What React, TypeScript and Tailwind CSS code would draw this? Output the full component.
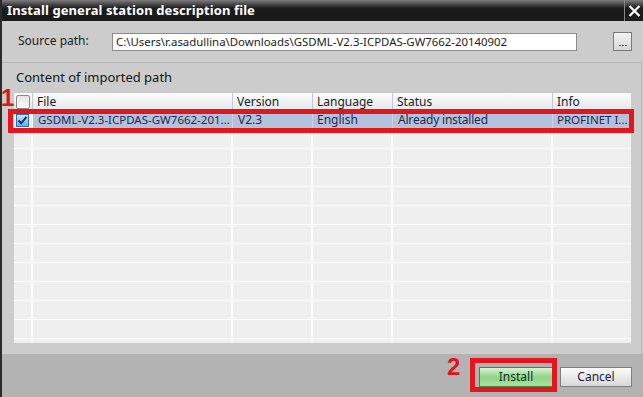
import React from "react";

const FONT = { fontFamily: '"Noto Sans", "Open Sans", sans-serif' };

const columns = [
  { key: "check", label: "", width: 19 },
  { key: "file", label: "File", width: 200 },
  { key: "version", label: "Version", width: 80 },
  { key: "language", label: "Language", width: 80 },
  { key: "status", label: "Status", width: 160 },
  { key: "info", label: "Info", width: 78 },
];

const gridCols = "grid grid-cols-[19px_200px_80px_80px_160px_78px]";

function Checkbox({ checked }: { checked?: boolean }) {
  if (checked) {
    return (
      <div className="w-[13px] h-[13px] border border-[#2c6fb0] bg-gradient-to-b from-[#c9e6fb] to-[#5fb1ea] flex items-center justify-center">
        <svg width="11" height="11" viewBox="0 0 11 11">
          <path d="M1.5 5.5 L4.2 8.3 L9.5 1.8" stroke="#0b2f6e" strokeWidth="2" fill="none" />
        </svg>
      </div>
    );
  }
  return (
    <div className="w-[14px] h-[14px] border border-[#8a8a8a] rounded-[2px] bg-gradient-to-b from-[#e6e6e6] to-[#f8f8f8]" />
  );
}

function GsdTable() {
  const emptyRows = Array.from({ length: 12 });
  return (
    <div className="ml-[12px] w-[617px] h-[251px] overflow-hidden bg-[#efefef]">
      {/* header */}
      <div className={`${gridCols} h-[19px] border-t border-[#c8c8c8] bg-gradient-to-b from-[#fbfbfb] to-[#e3e6eb] text-[12px] text-[#1c1c1c]`}>
        {columns.map((c, i) => (
          <div
            key={c.key}
            className={`flex items-center pl-[4px] ${i < columns.length - 1 ? "border-r border-[#c4c8cf]" : ""}`}
          >
            {c.key === "check" ? <div className="ml-[-2px]"><Checkbox /></div> : c.label}
          </div>
        ))}
      </div>

      {/* selected row */}
      <div className={`${gridCols} h-[19px] border-b border-white text-[12px] text-[#1f2a4d]`}>
        <div className="flex items-center pl-[2px] border-r border-white">
          <Checkbox checked />
        </div>
        <div className="flex items-center pl-[5px] bg-[#b3c2dc] border-r border-[#c9d3e5] whitespace-nowrap text-[11.5px]">GSDML-V2.3-ICPDAS-GW7662-201...</div>
        <div className="flex items-center pl-[5px] bg-[#b3c2dc] border-r border-[#c9d3e5]">V2.3</div>
        <div className="flex items-center pl-[4px] bg-[#b3c2dc] border-r border-[#c9d3e5]">English</div>
        <div className="flex items-center pl-[5px] bg-[#b3c2dc] border-r border-[#c9d3e5] tracking-[-0.2px]">Already installed</div>
        <div className="flex items-center pl-[4px] bg-[#b3c2dc] whitespace-nowrap text-[11.5px]">PROFINET I...</div>
      </div>

      {emptyRows.map((_, r) => (
        <div key={r} className={`${gridCols} h-[19px] border-b border-white`}>
          {columns.map((c, i) => (
            <div key={c.key} className={i < columns.length - 1 ? "border-r-2 border-white" : ""} />
          ))}
        </div>
      ))}
    </div>
  );
}

export default function App() {
  return (
    <div style={FONT} className="relative w-[643px] h-[397px] overflow-hidden flex flex-col bg-[#cccccc] border-l-2 border-[#2b2b2b]">
      {/* title bar */}
      <div className="h-[21px] shrink-0 flex items-stretch bg-gradient-to-b from-[#7d7d7d] via-[#1c1c1c] via-40% to-[#1a1a1a]">
        <div className="flex-1 flex items-center pl-[5px] text-white font-bold text-[13px] tracking-[0.1px]">
          Install general station description file
        </div>
        <div className="w-[19px] border-l border-[#8a8a8a] flex items-center justify-center">
          <svg width="13" height="12" viewBox="0 0 13 12">
            <path d="M1.5 1 L11.5 11 M11.5 1 L1.5 11" stroke="#ffffff" strokeWidth="2.2" />
          </svg>
        </div>
      </div>

      {/* source path */}
      <div className="h-[41px] shrink-0 flex items-center text-[12px] text-[#1c1c1c]">
        <div className="w-[110px] pl-[16px] pb-[2px]">Source path:</div>
        <div className="w-[465px] h-[18px] bg-white border border-[#8c8c8c] flex items-center pl-[3px] whitespace-nowrap text-[11.4px]">
          C:\Users\r.asadullina\Downloads\GSDML-V2.3-ICPDAS-GW7662-20140902
        </div>
        <div className="ml-[36px] w-[19px] h-[19px] border border-[#7a7a7a] bg-gradient-to-b from-[#f4f4f4] to-[#d6d6d6] flex items-end justify-center pb-[4px] gap-[1px]">
          <span className="w-[2px] h-[1px] bg-[#c04040]" />
          <span className="w-[2px] h-[1px] bg-[#3a6a3a]" />
          <span className="w-[2px] h-[1px] bg-[#4040c0]" />
        </div>
      </div>

      {/* content section */}
      <div className="h-[292px] shrink-0 border-t border-[#b9b9b9] border-r border-r-[#b9b9b9] mr-[1px] flex flex-col">
        <div className="h-[29px] flex items-center pl-[14px] text-[13px] text-[#141414]">
          Content of imported path
        </div>
        <GsdTable />
      </div>

      {/* footer */}
      <div className="flex-1 bg-[#b3b3b3] flex items-center justify-end pr-[11px] gap-[7px] pt-[3px]">
        <button className="w-[74px] h-[20px] border border-[#3f8a3f] bg-gradient-to-b from-[#d9f3d3] via-[#8fd588] to-[#a9e0a1] text-[12px] text-[#14301a] flex items-center justify-center">
          Install
        </button>
        <button className="w-[72px] h-[20px] border border-[#7e7e7e] bg-gradient-to-b from-[#fbfbfb] to-[#d8d8d8] text-[12px] text-[#1c1c3a] flex items-center justify-center">
          Cancel
        </button>
      </div>

      {/* annotations */}
      <div className="absolute left-[-1px] top-[86px] text-[24px] font-bold text-[#e0141c] leading-none" style={{ fontFamily: '"Liberation Sans", Arial, sans-serif' }}>
        1
      </div>
      <div className="absolute left-[6px] top-[109px] w-[626px] h-[24px] border-[5px] border-[#e3161d]" />
      <div className="absolute left-[445px] top-[355px] text-[24px] font-bold text-[#e0141c] leading-none" style={{ fontFamily: '"Liberation Sans", Arial, sans-serif' }}>
        2
      </div>
      <div className="absolute left-[468px] top-[358px] w-[87px] h-[34px] border-[5px] border-[#e3161d]" />
    </div>
  );
}
